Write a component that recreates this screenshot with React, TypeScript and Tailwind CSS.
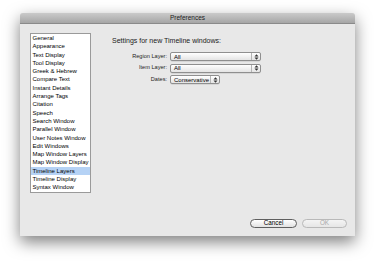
import React from "react";

const items = [
  "General",
  "Appearance",
  "Text Display",
  "Tool Display",
  "Greek & Hebrew",
  "Compare Text",
  "Instant Details",
  "Arrange Tags",
  "Citation",
  "Speech",
  "Search Window",
  "Parallel Window",
  "User Notes Window",
  "Edit Windows",
  "Map Window Layers",
  "Map Window Display",
  "Timeline Layers",
  "Timeline Display",
  "Syntax Window",
];

function Arrows() {
  return (
    <svg width="5" height="6" viewBox="0 0 5 6" className="shrink-0">
      <path d="M2.5 0.3 L4.5 2.4 L0.5 2.4 Z" fill="#333" />
      <path d="M2.5 5.7 L4.5 3.6 L0.5 3.6 Z" fill="#333" />
    </svg>
  );
}

function Select({ value, width }: { value: string; width: string }) {
  return (
    <div
      className={`${width} h-[9px] flex items-center justify-between rounded-[2px] border border-[#8f8f8f] bg-gradient-to-b from-[#ffffff] to-[#e4e4e4] pl-[3px] shadow-[0_0.5px_0.5px_rgba(0,0,0,0.15)]`}
    >
      <span className="text-[6px] leading-none text-black whitespace-nowrap">{value}</span>
      <div className="h-full flex items-center border-l border-[#b5b5b5] px-[1.5px]">
        <Arrows />
      </div>
    </div>
  );
}

export default function App() {
  return (
    <div
      className="w-[375px] h-[263px] bg-white pl-[20px] pt-[13px] overflow-hidden"
      style={{ fontFamily: '"Liberation Sans", Arial, sans-serif' }}
    >
      <div className="w-[335px] h-[223px] flex flex-col bg-[#e8e8e8] shadow-[0_6px_16px_rgba(0,0,0,0.5)] rounded-t-[3px] overflow-hidden">
        <div className="h-[11px] shrink-0 flex items-center justify-center bg-gradient-to-b from-[#cacaca] to-[#a6a6a6] border-b border-[#8a8a8a]">
          <span className="text-[6.5px] leading-none text-[#222]">Preferences</span>
        </div>
        <div className="flex flex-1 pt-[9px] pl-[10px] pr-[8px] pb-[8px]">
          <div className="w-[61px] h-[160px] bg-white border border-[#9a9a9a] flex flex-col overflow-hidden">
            {items.map((it) => (
              <div
                key={it}
                className={`h-[8.3px] shrink-0 pl-[1.5px] text-[6px] leading-[8.3px] text-black whitespace-nowrap ${
                  it === "Timeline Layers" ? "bg-[#b5d2f5]" : ""
                }`}
              >
                {it}
              </div>
            ))}
          </div>
          <div className="flex-1 flex flex-col pl-[21px]">
            <div className="text-[7px] leading-none text-[#222] mt-[4px]">
              Settings for new Timeline windows:
            </div>
            <div className="mt-[8px] flex flex-col gap-[2.5px]">
              <div className="flex items-center">
                <div className="w-[58px] text-right text-[5.6px] text-[#222] pr-[3px] leading-none">Region Layer:</div>
                <Select value="All" width="w-[91px]" />
              </div>
              <div className="flex items-center">
                <div className="w-[58px] text-right text-[5.6px] text-[#222] pr-[3px] leading-none">Item Layer:</div>
                <Select value="All" width="w-[91px]" />
              </div>
              <div className="flex items-center">
                <div className="w-[58px] text-right text-[5.6px] text-[#222] pr-[3px] leading-none">Dates:</div>
                <Select value="Conservative" width="w-[50px]" />
              </div>
            </div>
            <div className="flex-1" />
            <div className="flex justify-end gap-[5px]">
              <div className="w-[47px] h-[9px] rounded-full border border-[#5f5f5f] bg-gradient-to-b from-[#ffffff] to-[#e2e2e2] flex items-center justify-center">
                <span className="text-[6.3px] leading-none text-black">Cancel</span>
              </div>
              <div className="w-[45px] h-[9px] rounded-full border border-[#b9b9b9] bg-gradient-to-b from-[#f4f4f4] to-[#e6e6e6] flex items-center justify-center">
                <span className="text-[6.3px] leading-none text-[#a8a8a8]">OK</span>
              </div>
            </div>
          </div>
        </div>
      </div>
    </div>
  );
}
